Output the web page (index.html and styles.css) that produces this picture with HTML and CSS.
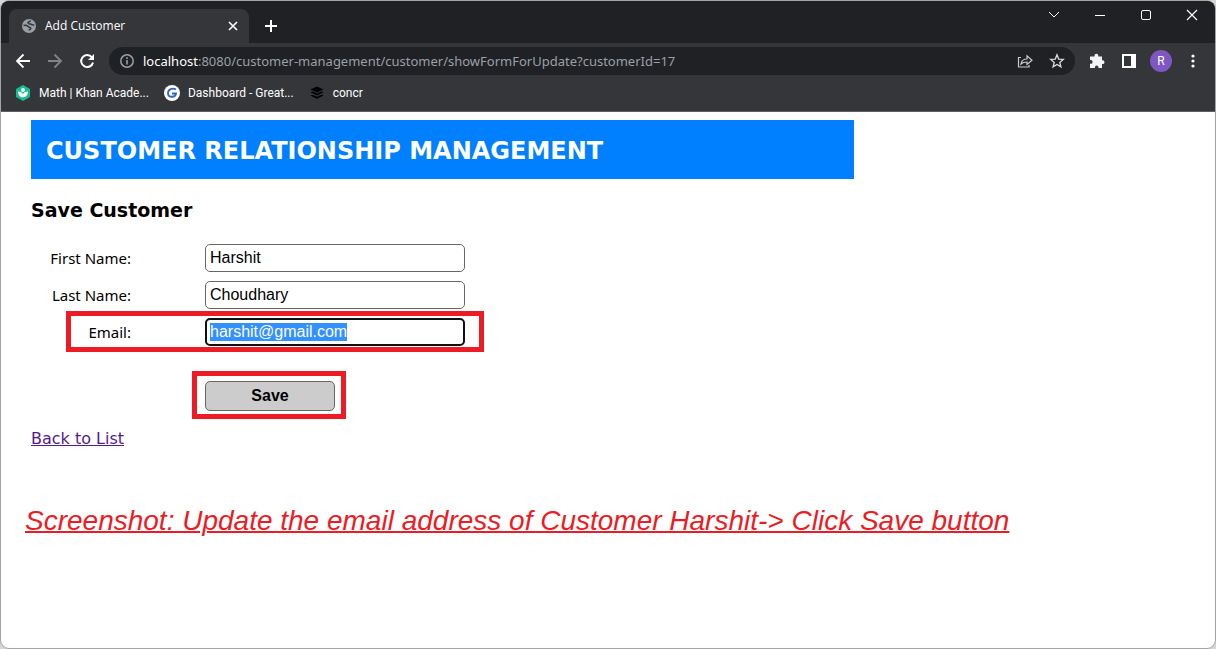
FILE: index.html
```html
<!DOCTYPE html>
<html lang="en">
<head>
<meta charset="utf-8">
<title>Add Customer</title>
<link rel="stylesheet" href="styles.css">
</head>
<body>
<div class="window">
  <header class="chrome">
    <div class="titlebar">
      <div class="tab">
        <svg class="icon" width="14" height="14" viewBox="0 0 14 14"><circle cx="7" cy="7" r="7" fill="#9aa0a6"/><path d="M1.500 6.500c2-.6 3.300-.4 4.300.8s3 .6 3 2-1.600 1-1.800 2.200M8.500 1.500C8 3 6 2.500 6 3.800s1.500 1 2.500 1.200 1 1.500 3.800 1" fill="none" stroke="#35363a" stroke-width="1.500"/></svg>
        <span class="tab-title">Add Customer</span>
        <button class="icon-btn tab-close" aria-label="Close tab"><svg width="10" height="10" viewBox="0 0 10 10"><path d="M1 1l8 8M9 1l-8 8" stroke="#fff" stroke-width="1.600"/></svg></button>
      </div>
      <button class="icon-btn new-tab" aria-label="New tab"><svg width="12" height="12" viewBox="0 0 12 12"><path d="M6 0v12M0 6h12" stroke="#fff" stroke-width="2"/></svg></button>
      <div class="window-controls">
        <button class="icon-btn" aria-label="Search tabs"><svg width="12" height="12" viewBox="0 0 12 12"><path d="M1 3l5 5 5-5" fill="none" stroke="#fff"/></svg></button>
        <button class="icon-btn" aria-label="Minimize"><svg width="12" height="12" viewBox="0 0 12 12"><path d="M1 6.500h10" stroke="#fff"/></svg></button>
        <button class="icon-btn" aria-label="Maximize"><svg width="12" height="12" viewBox="0 0 12 12"><rect x="1.500" y="1.500" width="9" height="9" rx="1.500" fill="none" stroke="#fff"/></svg></button>
        <button class="icon-btn" aria-label="Close"><svg width="12" height="12" viewBox="0 0 12 12"><path d="M1 1l10 10M11 1L1 11" stroke="#fff" stroke-width="1.200"/></svg></button>
      </div>
    </div>
    <nav class="toolbar">
      <div class="nav-buttons">
        <button class="icon-btn" aria-label="Back"><svg width="16" height="16" viewBox="0 0 16 16"><path d="M15 8H2.500M8.500 1.500L2 8l6.500 6.500" fill="none" stroke="#fff" stroke-width="1.800"/></svg></button>
        <button class="icon-btn" aria-label="Forward"><svg width="16" height="16" viewBox="0 0 16 16"><path d="M1 8h12.500M7.500 1.500L14 8l-6.500 6.500" fill="none" stroke="#818387" stroke-width="1.800"/></svg></button>
        <button class="icon-btn" aria-label="Reload"><svg width="16" height="16" viewBox="0 0 16 16"><path d="M12.800 4.200A6 6 0 1 0 14 9.500" fill="none" stroke="#fff" stroke-width="2"/><path d="M15 1v6H9z" fill="#fff"/></svg></button>
      </div>
      <div class="address">
        <svg class="icon" width="14" height="14" viewBox="0 0 14 14"><circle cx="7" cy="7" r="6.200" fill="none" stroke="#9aa0a6" stroke-width="1.500"/><path d="M7 6v4.500M7 3.300v1.600" stroke="#9aa0a6" stroke-width="1.600"/></svg>
        <span class="url"><span class="host">localhost</span>:8080/customer-management/customer/showFormForUpdate?customerId=17</span>
        <button class="icon-btn" aria-label="Share"><svg width="16" height="16" viewBox="0 0 16 16"><path d="M4 4.500H1.500v9.500h10.500V12M4 11c.5-3.500 2.500-5 6-5V2.800l5 4.400-5 4.200V9C7.500 9 5.500 9.400 4 11z" fill="none" stroke="#c8c9cb" stroke-width="1.200"/></svg></button>
        <button class="icon-btn" aria-label="Bookmark this page"><svg width="16" height="16" viewBox="0 0 16 16"><path d="M8 1.800l1.700 4.300 4.600.3-3.500 3 1.100 4.500L8 11.400l-3.900 2.500 1.100-4.500-3.500-3 4.600-.3z" fill="none" stroke="#dadce0" stroke-width="1.300"/></svg></button>
      </div>
      <div class="tools">
        <button class="icon-btn" aria-label="Extensions"><svg width="16" height="16" viewBox="0 0 16 16"><path d="M1 3.500h4.500v-.8a1.900 1.900 0 0 1 3.800 0v.8H13v3.800h.6a1.900 1.900 0 0 1 0 3.800H13v4H9.500v-.7a1.800 1.800 0 0 0-3.600 0v.7H1v-4.300h.7a1.900 1.900 0 0 0 0-3.800H1z" fill="#f1f3f4"/></svg></button>
        <button class="icon-btn" aria-label="Side panel"><svg width="14" height="14" viewBox="0 0 14 14"><path d="M0 0h14v14H0zM2 2v10h7V2z" fill="#fff" fill-rule="evenodd"/></svg></button>
        <button class="icon-btn avatar" aria-label="Profile">R</button>
        <button class="icon-btn" aria-label="Menu"><svg width="4" height="14" viewBox="0 0 4 14"><g fill="#fff"><circle cx="2" cy="2" r="1.600"/><circle cx="2" cy="7" r="1.600"/><circle cx="2" cy="12" r="1.600"/></g></svg></button>
      </div>
    </nav>
    <nav class="bookmarks">
      <a class="bookmark" href="#"><svg width="16" height="16" viewBox="0 0 16 16"><path d="M8 0l7 4v8l-7 4-7-4V4z" fill="#14bf96"/><circle cx="8" cy="5" r="1.900" fill="#fff"/><path d="M3 6.500c2.800 0 4.600 1.300 5 3 .4-1.700 2.200-3 5-3 0 3.500-2.200 5.800-5 5.800S3 10 3 6.500z" fill="#fff"/></svg><span>Math | Khan Acade...</span></a>
      <a class="bookmark" href="#"><svg width="16" height="16" viewBox="0 0 16 16"><circle cx="8" cy="8" r="8" fill="#fff"/><path d="M12 4.500C8.500 2.500 4 4.200 4 8.200c0 4.600 7.300 4.800 8 .3H8" fill="none" stroke="#2f66c5" stroke-width="1.800"/></svg><span>Dashboard - Great...</span></a>
      <a class="bookmark" href="#"><svg width="16" height="16" viewBox="0 0 16 16"><path d="M8 1.500l6.500 3L8 7.500l-6.500-3zM1.500 7.200l2-.8L8 8.500l4.500-2.100 2 .8L8 10.500zM1.500 10.500l2-.8L8 11.800l4.500-2.100 2 .8L8 13.800z" fill="#000"/></svg><span>concr</span></a>
    </nav>
  </header>
  <main class="page">
    <div class="banner"><h1>CUSTOMER RELATIONSHIP MANAGEMENT</h1></div>
    <h2 class="heading">Save Customer</h2>
    <form class="form">
      <div class="row"><label for="first">First Name:</label><input id="first" type="text" value="Harshit"></div>
      <div class="row"><label for="last">Last Name:</label><input id="last" type="text" value="Choudhary"></div>
      <div class="row row-marked"><label for="email">Email:</label><input id="email" type="text" value="harshit@gmail.com" autofocus></div>
      <div class="actions"><button class="save" type="button">Save</button></div>
    </form>
    <a class="back" href="#">Back to List</a>
    <p class="caption"><span>Screenshot: Update the email address of Customer Harshit</span><span>-&gt; Click Save button</span></p>
  </main>
</div>
<script src="script.js"></script>
</body>
</html>
```
FILE: script.js
```js
const email = document.getElementById("email");
email.focus();
email.select();
```
FILE: styles.css
```css
*, *::after { box-sizing: border-box; }
body {
  margin: 0;
  background: #d6d6d6;
  font-family: "DejaVu Sans", sans-serif;
}
.window {
  display: flex;
  flex-direction: column;
  min-height: 100vh;
  border: 1px solid #a3a5a3;
  border-radius: 9px;
  overflow: hidden;
  background: #fff;
}
.chrome {
  background: #35363a;
  border-bottom: 1px solid #5f6064;
  color: #fff;
  font: 12px/16px "Open Sans", sans-serif;
}
.icon-btn {
  display: flex;
  align-items: center;
  justify-content: center;
  padding: 0;
  border: 0;
  background: none;
  color: #fff;
}
.icon { flex: none; }
.titlebar {
  display: flex;
  height: 42px;
  padding: 8px 0 0 8px;
  background: #202124;
}
.tab {
  display: flex;
  align-items: center;
  width: 240px;
  padding: 0 10px 0 13px;
  gap: 9px;
  border-radius: 8px 8px 0 0;
  background: #35363a;
}
.tab-title { flex: 1; }
.tab-close { width: 12px; height: 16px; }
.new-tab { width: 28px; margin-left: 8px; }
.window-controls {
  display: flex;
  height: 12px;
  margin-left: auto;
}
.window-controls .icon-btn { width: 46px; }
.toolbar {
  display: flex;
  align-items: center;
  height: 36px;
}
.nav-buttons {
  display: flex;
  gap: 16px;
  padding: 0 14px;
}
.address {
  display: flex;
  flex: 1;
  align-items: center;
  gap: 16px;
  height: 28px;
  padding: 0 10px 0 11px;
  border-radius: 14px;
  background: #202124;
}
.url {
  flex: 1;
  margin-left: -7px;
  color: #9aa0a6;
  font: 13px/20px "Noto Sans", sans-serif;
  white-space: nowrap;
}
.host { color: #fff; }
.tools {
  display: flex;
  align-items: center;
  gap: 17px;
  width: 140px;
  padding-left: 14px;
}
.avatar {
  width: 22px;
  height: 22px;
  margin: 0 2px 0 -3px;
  border-radius: 50%;
  background: #7e57c2;
  font: 12px/16px Roboto, sans-serif;
}
.bookmarks {
  display: flex;
  gap: 15px;
  height: 32px;
  padding: 0 14px;
}
.bookmark {
  display: flex;
  align-items: center;
  gap: 8px;
  height: 28px;
  color: #fff;
  font: 12px/16px Roboto, sans-serif;
  text-decoration: none;
}
.page { padding: 8px 8px 0 30px; }
.banner {
  width: 70%;
  padding: 17px 15px 13px;
  background: #0080ff;
  color: #fff;
}
.banner h1 {
  margin: 0;
  font-size: 24px;
  line-height: 29px;
  white-space: nowrap;
}
.heading {
  margin: 19px 0 22px;
  font-size: 19px;
  line-height: 24px;
}
.form {
  display: flex;
  flex-direction: column;
  gap: 9px;
}
.row {
  display: grid;
  grid-template-columns: 100px 260px;
  column-gap: 74px;
  align-items: center;
  position: relative;
}
.row label {
  font: 15px/20px "Noto Sans", sans-serif;
  text-align: right;
}
.row input {
  width: 100%;
  height: 28px;
  padding: 0 4px 1px;
  border: 1px solid #666;
  border-radius: 5px;
  color: #000;
  font: 16px/18px "Liberation Sans", Arial, sans-serif;
}
.row input:focus {
  border: 2px solid #101010;
  padding: 0 3px 1px;
  outline: 0;
}
.row input::selection { background: #3390ff; color: #fff; }
.row-marked::after {
  content: "";
  position: absolute;
  top: -7px;
  left: 35px;
  width: 418px;
  height: 41px;
  border: 5px solid #ed1c24;
  pointer-events: none;
}
.actions {
  align-self: flex-start;
  margin: 16px 0 0 161px;
  padding: 5px 6px 3px 8px;
  border: 5px solid #ed1c24;
}
.save {
  display: block;
  width: 130px;
  height: 30px;
  border: 1px solid #666;
  border-radius: 5px;
  background: #ccc;
  color: #000;
  font: bold 16px/18px "Liberation Sans", Arial, sans-serif;
}
.back {
  display: inline-block;
  margin-top: 10px;
  color: #551a8b;
  font-size: 16px;
  line-height: 20px;
}
.caption {
  margin: 56px 0 0 -6px;
  color: #ed1c24;
  font: italic 28px/32px "Liberation Sans", Arial, sans-serif;
}
.caption span { text-decoration: underline; text-decoration-thickness: 2px; }
```
